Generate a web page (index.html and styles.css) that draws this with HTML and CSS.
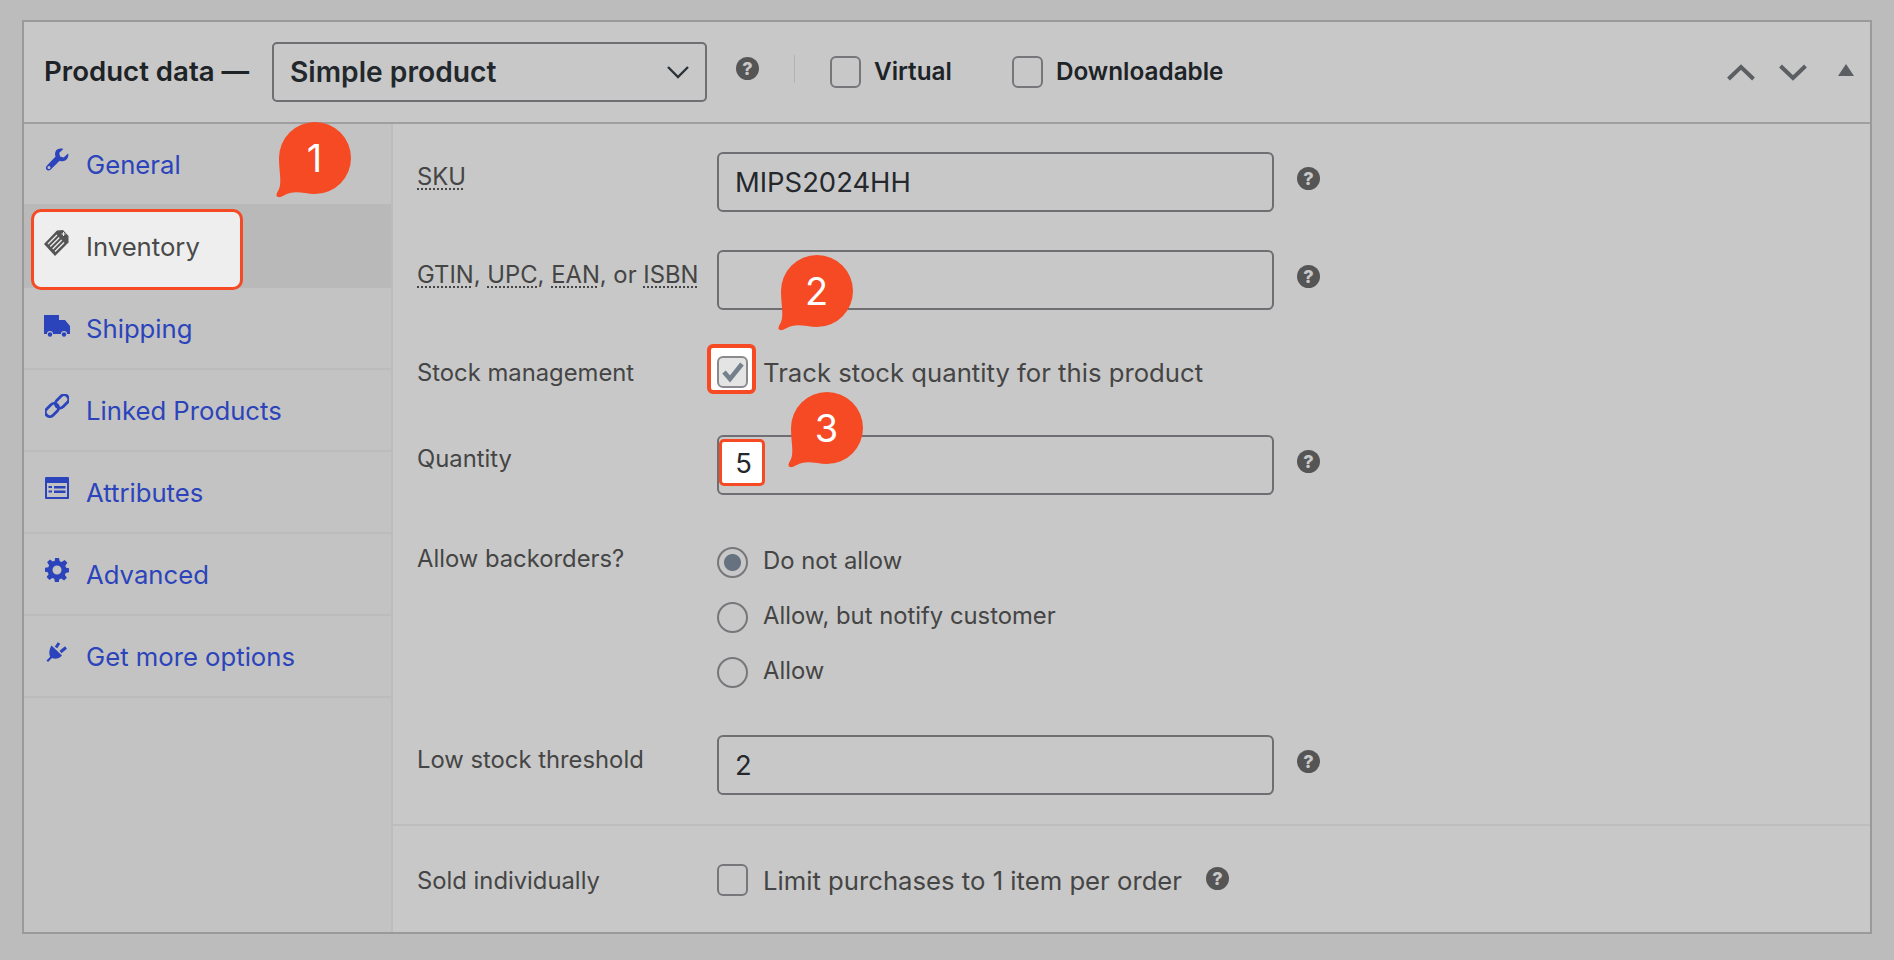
FILE: index.html
```html
<!DOCTYPE html>
<html lang="en">
<head>
<meta charset="utf-8">
<title>Product data</title>
<link rel="stylesheet" href="styles.css">
</head>
<body>
<section class="panel">
  <header class="head">
    <h2 class="head-title">Product data —</h2>
    <div class="select">
      <span>Simple product</span>
      <svg class="select-arrow" viewBox="0 0 24 14"><path d="M2 2l10 10L22 2" fill="none" stroke="#2c3338" stroke-width="2.4"/></svg>
    </div>
    <span class="help head-help">?</span>
    <span class="head-sep"></span>
    <label class="head-check"><span class="check"></span><b>Virtual</b></label>
    <label class="head-check"><span class="check"></span><b>Downloadable</b></label>
    <div class="head-tools">
      <svg class="tool" viewBox="0 0 28 17"><path d="M1.500 15L14 3l12.500 12" fill="none" stroke="#5b5e62" stroke-width="4"/></svg>
      <svg class="tool" viewBox="0 0 28 17"><path d="M1.500 2L14 14 26.500 2" fill="none" stroke="#5b5e62" stroke-width="4"/></svg>
      <svg class="tool-tri" viewBox="0 0 16 12"><path d="M8 0l8 12H0z" fill="#5b5e62"/></svg>
    </div>
  </header>
  <div class="body">
    <nav class="side">
      <a class="tab">
        <svg class="ico" viewBox="0 0 24 24"><path d="M23 5.500l-4.300 4-3.600-.9-.9-3.500L18.300 1c-3-1-6.500-.3-7.700 2.400-.8 1.700-.7 3.500 0 5.200L2 17.600c-1.500 1.500-1.400 3.200-.4 4.200s2.800 1.100 4.200-.3l8.800-8.800c1.900.8 3.900.7 5.700-.3 2.800-1.700 3.700-4.900 2.700-7.400zM4 21a1.500 1.500 0 1 1 0-3 1.500 1.500 0 0 1 0 3z" fill="currentColor"/></svg>
        <span>General</span>
      </a>
      <a class="tab tab-active">
        <svg class="ico ico-inv" viewBox="5 5 26 28"><path d="M5 20L18 6.500 24 6l5.500 6v6.500L16 32z" fill="#555"/><path d="M9 20l9-9M11.300 22.500l9-9M13.700 25l9-9M16 27.500l9-9" stroke="#eee" stroke-width="1.300"/><path d="M24.500 8v4M22.500 10h4" stroke="#eee" stroke-width="1"/></svg>
        <span>Inventory</span>
      </a>
      <a class="tab">
        <svg class="ico ico-truck" viewBox="0 0 26 22"><path d="M0 0h15v5h6l5 6v8h-3a3 3 0 0 0-6 0H9a3 3 0 0 0-6 0H0z" fill="currentColor"/><circle cx="6" cy="19.500" r="2.200" fill="currentColor"/><circle cx="20" cy="19.500" r="2.200" fill="currentColor"/></svg>
        <span>Shipping</span>
      </a>
      <a class="tab">
        <svg class="ico" viewBox="6 4 24 24"><rect x="5.500" y="15.500" width="15" height="9" rx="4.500" transform="rotate(-45 13 20)" fill="none" stroke="currentColor" stroke-width="2.800"/><rect x="15.500" y="7" width="15" height="9" rx="4.500" transform="rotate(-45 23 11.500)" fill="none" stroke="currentColor" stroke-width="2.800"/></svg>
        <span>Linked Products</span>
      </a>
      <a class="tab">
        <svg class="ico" viewBox="0 0 24 22"><path fill-rule="evenodd" d="M1 0h22a1 1 0 0 1 1 1v20a1 1 0 0 1-1 1H1a1 1 0 0 1-1-1V1a1 1 0 0 1 1-1zm1 6v14h20V6zm1.500 3H7v2H3.500zm0 4.500H7v2H3.500zM9 9h11.500v2.500H9zm0 4.500h11.500V16H9z" fill="currentColor"/></svg>
        <span>Attributes</span>
      </a>
      <a class="tab">
        <svg class="ico" viewBox="0 0 24 24"><path fill-rule="evenodd" d="M10 0h4l.7 3.300 2 .8L19.600 2l2.800 2.800-2.100 2.900.8 2L24 10.300v4l-3.300.6-.8 2 2 2.900-2.800 2.800-2.900-2-2 .8L13.900 24h-4l-.6-3.300-2-.8-2.900 2-2.800-2.800 2-2.900-.8-2L0 13.800v-4l3.300-.6.8-2-2-2.900L4.900 1.500l2.900 2 2-.8zM12 7.500a4.500 4.500 0 1 0 0 9 4.500 4.500 0 0 0 0-9z" fill="currentColor"/></svg>
        <span>Advanced</span>
      </a>
      <a class="tab">
        <svg class="ico ico-plug" viewBox="7 7 22 22"><path d="M12.500 11.500L23 21.500c-3 3.500-7 4-10 2.500l-4 4-1.500-1.500 3.700-3.800c-1.700-3.700-.7-8 1.300-11.200z" fill="currentColor"/><path d="M17 13.500l3-4.500M21.500 18l5.500-4.500" stroke="currentColor" stroke-width="3" fill="none"/></svg>
        <span>Get more options</span>
      </a>
    </nav>
    <div class="main">
      <div class="field f-sku">
        <span class="label"><span class="abbr">SKU</span></span>
        <div class="input">MIPS2024HH</div>
        <span class="help">?</span>
      </div>
      <div class="field f-gtin">
        <span class="label"><span class="abbr">GTIN</span>, <span class="abbr">UPC</span>, <span class="abbr">EAN</span>, or <span class="abbr">ISBN</span></span>
        <div class="input"></div>
        <span class="help">?</span>
      </div>
      <div class="field f-stock">
        <span class="label">Stock management</span>
        <span class="check check-on">
          <svg viewBox="0 0 24 24"><path d="M3 12l6 7L21 4" fill="none" stroke="#75808d" stroke-width="4.600"/></svg>
        </span>
        <span class="option">Track stock quantity for this product</span>
      </div>
      <div class="field f-qty">
        <span class="label">Quantity</span>
        <div class="input input-qty"><span class="qty-mark">5</span></div>
        <span class="help">?</span>
      </div>
      <div class="field f-back">
        <span class="label">Allow backorders?</span>
        <div class="radios">
          <label class="radio-row"><span class="radio radio-on"></span><span class="radio-text">Do not allow</span></label>
          <label class="radio-row"><span class="radio"></span><span class="radio-text">Allow, but notify customer</span></label>
          <label class="radio-row"><span class="radio"></span><span class="radio-text">Allow</span></label>
        </div>
      </div>
      <div class="field f-low">
        <span class="label">Low stock threshold</span>
        <div class="input">2</div>
        <span class="help">?</span>
      </div>
      <div class="field f-sold">
        <span class="label">Sold individually</span>
        <span class="check"></span>
        <span class="option">Limit purchases to 1 item per order</span>
        <span class="help help-sold">?</span>
      </div>
    </div>
  </div>
  <div class="bubble b1"><svg viewBox="-1 0 76 76"><path class="bubble-shape" d="M39 0A36 36 0 1 1 39 72C30 72 22 69 14 71 9 72 5 76 2 75-1 74 1 71 3 67 6 60 3 50 3 36A36 36 0 0 1 39 0Z"/></svg><span>1</span></div>
  <div class="bubble b2"><svg viewBox="-1 0 76 76"><path class="bubble-shape" d="M39 0A36 36 0 1 1 39 72C30 72 22 69 14 71 9 72 5 76 2 75-1 74 1 71 3 67 6 60 3 50 3 36A36 36 0 0 1 39 0Z"/></svg><span>2</span></div>
  <div class="bubble b3"><svg viewBox="-1 0 76 76"><path class="bubble-shape" d="M39 0A36 36 0 1 1 39 72C30 72 22 69 14 71 9 72 5 76 2 75-1 74 1 71 3 67 6 60 3 50 3 36A36 36 0 0 1 39 0Z"/></svg><span>3</span></div>
</section>
</body>
</html>
```

FILE: styles.css
```css
*, *::before, *::after { box-sizing: border-box; }
html, body { margin: 0; height: 100%; }
body {
  background: #bcbcbc;
  font-family: Inter, "Liberation Sans", sans-serif;
  font-size: 23.800px;
  color: #454545;
  padding: 20px 22px 0;
  overflow: hidden;
}
.panel {
  position: relative;
  height: 914px;
  border: 2px solid #9a9a9a;
  background: #c8c8c8;
  display: flex;
  flex-direction: column;
}
.head {
  height: 102px;
  flex: none;
  border-bottom: 2px solid #9f9f9f;
  display: flex;
  align-items: center;
  padding-left: 20px;
}
.head-title {
  margin: 0 0 3px;
  font-size: 27.600px;
  font-weight: 600;
  color: #1d2327;
  width: 228px;
  white-space: nowrap;
}
.select {
  width: 435px;
  height: 60px;
  border: 2px solid #6e6e73;
  border-radius: 5px;
  display: flex;
  align-items: center;
  justify-content: space-between;
  padding: 0 15px 0 16px;
  font-size: 28.200px;
  font-weight: 600;
  color: #23282d;
}
.select-arrow { width: 24px; height: 14px; }
.help {
  flex: none;
  width: 23px;
  height: 23px;
  border-radius: 50%;
  background: #555;
  color: #c8c8c8;
  font-size: 18px;
  font-weight: 800;
  line-height: 23px;
  text-align: center;
  margin-left: 23px;
}
.head-help { margin: 0 0 7px 29px; }
.head-sep { width: 1px; height: 28px; background: #b3b3b3; margin: 0 35px 6px; }
.head-check { display: flex; align-items: center; gap: 13px; margin: 0 50px 0 0; }
.head-check b { font-size: 24.300px; font-weight: 600; color: #1d2327; margin-top: -2px; }
.head-check:nth-of-type(1) { margin-right: 60px; }
.check {
  position: relative;
  flex: none;
  width: 31px;
  height: 32px;
  border: 2px solid #77777b;
  border-radius: 6px;
  display: block;
}
.head-tools {
  margin: 0 0 0 auto;
  padding-right: 16px;
  display: flex;
  align-items: center;
  gap: 24px;
}
.tool { width: 28px; height: 17px; }
.tool-tri { width: 16px; height: 12px; margin: 0 0 4px 7px; }

.body { flex: 1; display: flex; min-height: 0; }
.side {
  width: 369px;
  flex: none;
  background: #c3c3c3;
  border-right: 2px solid #bcbcbc;
  font-size: 25.700px;
}
.tab {
  position: relative;
  height: 82px;
  display: flex;
  align-items: center;
  gap: 17px;
  padding-left: 21px;
  color: #2c44bb;
  border-bottom: 2px solid #bcbcbc;
}
.tab:first-child { height: 80px; border-bottom: 0; }
.tab-active {
  height: 84px;
  background: #b9b9b9;
  border-bottom: 0;
  color: #4a4a4a;
}
.tab-active::before {
  content: "";
  position: absolute;
  left: 7px;
  top: 5px;
  width: 212px;
  height: 81px;
  background: #eee;
  border: 3px solid #f54a24;
  border-radius: 10px;
}
.tab span, .tab svg { position: relative; }
.ico { width: 24px; height: 24px; flex: none; margin-top: -8px; }
.ico-inv { width: 26px; height: 28px; margin: -6px -1px 0 -1px; }
.ico-truck { width: 26px; height: 22px; margin: -4px -1px 0 -1px; }
.ico-plug { width: 22px; height: 22px; margin-left: 1px; margin-right: 1px; }

.main { flex: 1; padding-left: 24px; min-width: 0; }
.field { display: flex; align-items: flex-start; position: relative; }
.label { flex: none; width: 300px; white-space: nowrap; padding-top: 4px; }
.abbr { text-decoration: underline dotted 2px; text-underline-offset: 3px; }
.input {
  flex: none;
  width: 557px;
  height: 60px;
  border: 2px solid #6e6e73;
  border-radius: 6px;
  padding-left: 16px;
  line-height: 56px;
  font-size: 27.400px;
  color: #24282d;
}
.field > .help { margin-top: 15px; }
.f-sku { margin-top: 28px; }
.f-sku .label { margin-top: 6px; }
.f-gtin { margin-top: 38px; }
.f-gtin .label { margin-top: 6px; }
.f-stock { margin-top: 46px; height: 32px; align-items: center; }
.f-stock .label { padding-top: 0; }
.check-on { margin-right: 15px; }
.check-on::before {
  content: "";
  position: absolute;
  left: -12px;
  top: -14px;
  width: 49px;
  height: 50px;
  background: #fff;
  border: 4px solid #f54a24;
  border-radius: 6px;
}
.check-on::after {
  content: "";
  position: absolute;
  inset: -2px;
  background: #e4e4e4;
  border: 2px solid #8a8a8e;
  border-radius: 6px;
}
.check-on svg { position: absolute; left: 2px; top: 2px; width: 24px; height: 24px; z-index: 1; }
.f-qty { margin-top: 47px; }
.f-qty .label { margin-top: 5px; }
.input-qty { padding: 0; position: relative; }
.qty-mark {
  position: absolute;
  left: 0;
  top: 2px;
  width: 46px;
  height: 47px;
  background: #fff;
  border: 3px solid #f54a24;
  border-radius: 5px;
  padding-left: 3px;
  text-align: center;
  line-height: 43px;
}
.f-back { margin-top: 52px; }
.f-back .label { margin-top: -7px; }
.radios { display: flex; flex-direction: column; gap: 24px; }
.radio-row { display: flex; align-items: center; gap: 15px; height: 31px; }
.radio {
  flex: none;
  width: 31px;
  height: 31px;
  border: 2px solid #77777b;
  border-radius: 50%;
  display: block;
}
.radio-on { background: radial-gradient(circle, #667280 0 8px, transparent 9px); }
.radio-text { white-space: nowrap; margin-top: -4px; }
.option { white-space: nowrap; font-size: 25.700px; }
.f-low { margin-top: 47px; }
.f-low .label { margin-top: 6px; }
.f-sold {
  margin: 29px 0 0 -24px;
  padding: 38px 0 0 24px;
  border-top: 2px solid #bdbdbd;
  align-items: center;
}
.f-sold .label { padding-top: 0; }
.f-sold .check { margin-right: 15px; }
.f-sold .help-sold { margin: 0 0 4px 24px; }

.bubble { position: absolute; width: 76px; height: 76px; color: #fff; }
.bubble svg { display: block; width: 76px; height: 76px; }
.bubble-shape { fill: #f54a24; }
.bubble span {
  position: absolute;
  left: 3px;
  top: 0;
  width: 73px;
  height: 72px;
  text-align: center;
  line-height: 72px;
  font-size: 38px;
  font-weight: 400;
}
.b1 { left: 251px; top: 100px; }
.b2 { left: 753px; top: 233px; }
.b3 { left: 763px; top: 370px; }
```
